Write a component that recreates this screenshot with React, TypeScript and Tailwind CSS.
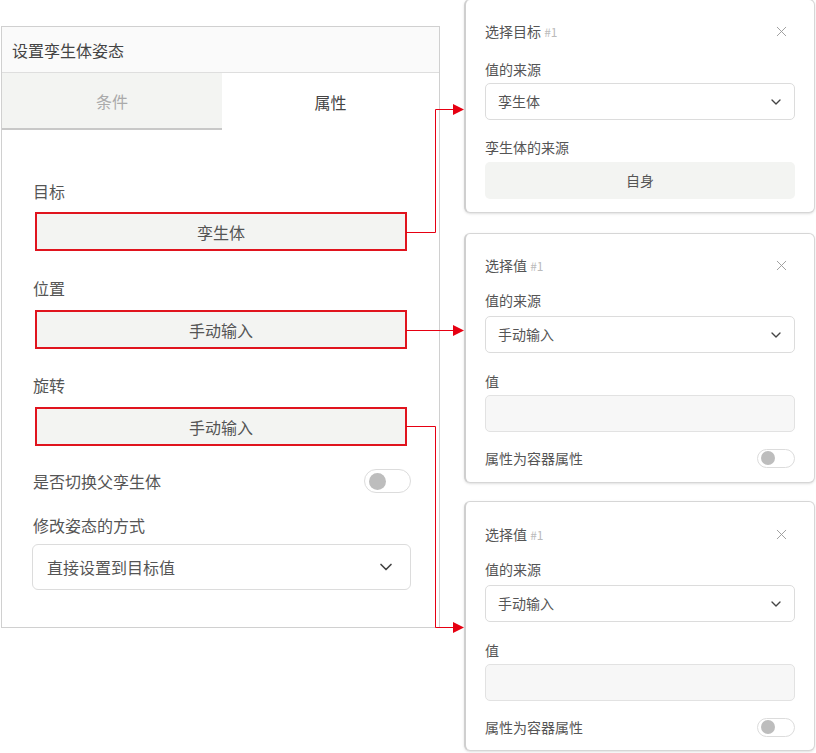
import React from 'react';
import { ChevronDown, X } from 'lucide-react';

const font = { fontFamily: '"Noto Sans CJK SC", "Noto Sans", sans-serif' };

const Toggle: React.FC<{ big?: boolean }> = ({ big }) => (
  <div
    className={`flex items-center rounded-full border border-[#dcdcdc] bg-white ${
      big ? 'w-[47px] h-[24px] px-[4px]' : 'w-[38px] h-[19px] px-[3px]'
    }`}
  >
    <div className={`rounded-full bg-[#bdbdbd] ${big ? 'w-[17px] h-[17px]' : 'w-[14px] h-[14px]'}`} />
  </div>
);

const RedBox: React.FC<{ text: string; mt: string }> = ({ text, mt }) => (
  <div
    className={`${mt} ml-[2px] w-[372px] h-[39px] border-2 border-[#e0141e] bg-[#f3f4f2] flex items-center justify-center text-[16px] text-[#555]`}
  >
    {text}
  </div>
);

const Select: React.FC<{ text: string }> = ({ text }) => (
  <div className="w-[310px] h-[37px] rounded-[5px] border border-[#dcdcdc] bg-white flex items-center justify-between pl-[12px] pr-[10px] text-[14px] text-[#555]">
    <span>{text}</span>
    <ChevronDown className="w-[16px] h-[16px] text-[#444]" strokeWidth={2} />
  </div>
);

const PanelTitle: React.FC<{ title: string }> = ({ title }) => (
  <div className="flex items-center justify-between h-[20px] pr-[5px]">
    <div className="text-[14px] text-[#555]">
      {title} <span className="text-[12px] text-[#bbb]">#1</span>
    </div>
    <X className="w-[17px] h-[17px] text-[#999]" strokeWidth={1.3} />
  </div>
);

const ValuePanel: React.FC<{ pt: string }> = ({ pt }) => (
  <div className={`h-[250px] rounded-[6px] border border-[#d6d6d6] border-l-2 border-l-[#cfcfcf] bg-white shadow-sm pl-[19px] pr-[19px] ${pt}`}>
    <PanelTitle title="选择值" />
    <div className="mt-[15px] h-[20px] text-[14px] text-[#555] leading-[20px]">值的来源</div>
    <div className="mt-[6px]">
      <Select text="手动输入" />
    </div>
    <div className="mt-[18px] h-[20px] text-[14px] text-[#555] leading-[20px]">值</div>
    <div className="mt-[4px] w-[310px] h-[37px] rounded-[5px] border border-[#e2e2e2] bg-[#f7f7f7]" />
    <div className="mt-[16px] flex items-center justify-between h-[20px]">
      <span className="text-[14px] text-[#555]">属性为容器属性</span>
      <Toggle />
    </div>
  </div>
);

export default function App() {
  return (
    <div className="relative w-[816px] h-[753px] bg-white overflow-hidden" style={font}>
      <div className="flex">
        {/* left panel */}
        <div className="mt-[26px] ml-[1px] w-[439px] h-[602px] border border-[#d0d0d0] bg-white">
          <div className="h-[46px] bg-[#fafafa] border-b border-[#dedede] flex items-center pl-[10px] text-[16px] text-[#444]">
            设置孪生体姿态
          </div>
          <div className="flex h-[57px]">
            <div className="w-[220px] bg-[#f3f4f2] border-b-2 border-[#c8c8c8] flex items-center justify-center text-[16px] text-[#aaa]">
              条件
            </div>
            <div className="flex-1 flex items-center justify-center text-[16px] text-[#444]">属性</div>
          </div>
          <div className="pl-[31px] pt-[49px] text-[16px] text-[#555] leading-[24px]">
            <div>目标</div>
            <RedBox text="孪生体" mt="mt-[9px]" />
            <div className="mt-[25px]">位置</div>
            <RedBox text="手动输入" mt="mt-[10px]" />
            <div className="mt-[24px]">旋转</div>
            <RedBox text="手动输入" mt="mt-[10px]" />
            <div className="mt-[23px] w-[378px] flex items-center justify-between h-[24px]">
              <span>是否切换父孪生体</span>
              <Toggle big />
            </div>
            <div className="mt-[20px]">修改姿态的方式</div>
            <div className="mt-[7px] -ml-[1px] w-[379px] h-[46px] rounded-[6px] border border-[#dcdcdc] flex items-center justify-between pl-[14px] pr-[14px]">
              <span>直接设置到目标值</span>
              <ChevronDown className="w-[20px] h-[20px] text-[#444]" strokeWidth={2} />
            </div>
          </div>
        </div>

        {/* right column */}
        <div className="ml-[24px] w-[351px] flex flex-col">
          <div className="h-[214px] rounded-[6px] border border-[#d6d6d6] border-l-2 border-l-[#cfcfcf] bg-white shadow-sm pl-[19px] pr-[19px] pt-[21px] -mt-[1px]">
            <PanelTitle title="选择目标" />
            <div className="mt-[18px] h-[20px] text-[14px] text-[#555] leading-[20px]">值的来源</div>
            <div className="mt-[4px]">
              <Select text="孪生体" />
            </div>
            <div className="mt-[17px] h-[20px] text-[14px] text-[#555] leading-[20px]">孪生体的来源</div>
            <div className="mt-[5px] w-[310px] h-[37px] rounded-[5px] bg-[#f3f4f2] flex items-center justify-center text-[14px] text-[#555]">
              自身
            </div>
          </div>
          <div className="mt-[20px]">
            <ValuePanel pt="pt-[21px]" />
          </div>
          <div className="mt-[18px]">
            <ValuePanel pt="pt-[22px]" />
          </div>
        </div>
      </div>

      {/* connector arrows */}
      <svg className="absolute inset-0 pointer-events-none" width="816" height="753">
        <g stroke="#e60012" strokeWidth="1" fill="none">
          <path d="M406 232.5 H435.5 V109.5 H455" />
          <path d="M406 330.5 H455" />
          <path d="M406 426.5 H435.5 V627.5 H455" />
        </g>
        <g fill="#e60012">
          <polygon points="453,104 464,109.5 453,115" />
          <polygon points="453,325 464,330.5 453,336" />
          <polygon points="453,622 464,627.5 453,633" />
        </g>
      </svg>
    </div>
  );
}
